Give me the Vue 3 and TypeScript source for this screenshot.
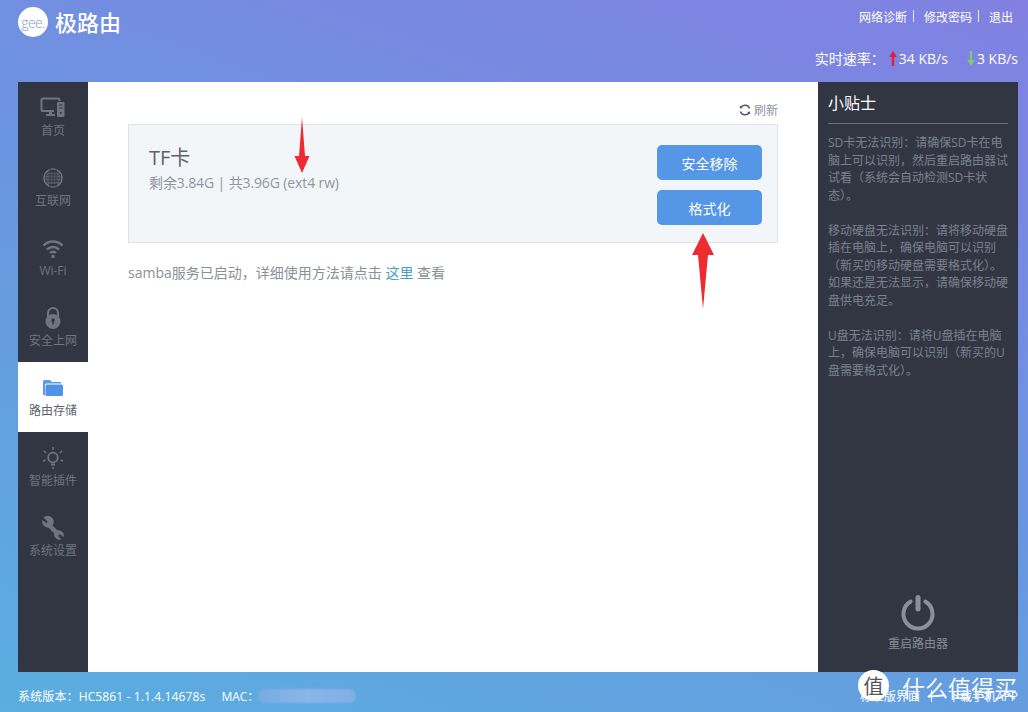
<template>
  <div class="page">
    <!-- Header -->
    <header class="top">
      <div class="brand">
        <span class="logo">gee.</span>
        <span class="brand-name">极路由</span>
      </div>
      <div class="top-right">
        <div class="top-links">
          <a>网络诊断</a><i></i><a>修改密码</a><i></i><a>退出</a>
        </div>
        <div class="speed">
          <span class="speed-label">实时速率：</span>
          <svg class="arrow-mini" width="8" height="15" viewBox="0 0 8 15"><path d="M4 0 8 6H5.2V15H2.8V6H0Z" fill="#e0223c" /></svg>
          <span class="speed-val">34 KB/s</span>
          <svg class="arrow-mini down" width="8" height="15" viewBox="0 0 8 15"><path d="M4 15 8 9H5.2V0H2.8V9H0Z" fill="#7fc97f" /></svg>
          <span>3 KB/s</span>
        </div>
      </div>
    </header>

    <!-- Main -->
    <main class="main">
      <nav class="side">
        <div v-for="item in navItems" :key="item.label" class="nav-item" :class="{ active: item.active }">
          <svg class="nav-icon" width="28" height="28" viewBox="0 0 28 28" v-html="item.icon"></svg>
          <span>{{ item.label }}</span>
        </div>
      </nav>

      <section class="content">
        <div class="refresh">
          <svg width="12" height="12" viewBox="0 0 12 12" fill="none">
            <path d="M10.6 4.4A5 5 0 0 0 1.6 3.6M1.4 7.6A5 5 0 0 0 10.4 8.4" stroke="#555b66" stroke-width="1.5" />
            <path d="M.6 1.6 1 4.6 4 4ZM11.4 10.4 11 7.4 8 8Z" fill="#555b66" />
          </svg>
          <span>刷新</span>
        </div>
        <div class="card">
          <div class="card-info">
            <div class="card-title">TF卡</div>
            <div class="card-sub">剩余3.84G | 共3.96G (ext4 rw)</div>
          </div>
          <div class="card-actions">
            <button type="button">安全移除</button>
            <button type="button">格式化</button>
          </div>
        </div>
        <p class="samba">samba服务已启动，详细使用方法请点击 <a>这里</a> 查看</p>
      </section>

      <aside class="tips">
        <h3>小贴士</h3>
        <div class="tips-body">
          <p v-for="tip in tips" :key="tip">{{ tip }}</p>
        </div>
        <div class="reboot">
          <svg width="36" height="36" viewBox="0 0 36 36" fill="none">
            <path d="M10.65 6.500A14.500 14.500 0 1 0 25.350 6.500" stroke="#8a909b" stroke-width="4" stroke-linecap="round" />
            <path d="M18 2.500V14" stroke="#8a909b" stroke-width="5" stroke-linecap="round" />
          </svg>
          <span>重启路由器</span>
        </div>
      </aside>
    </main>

    <!-- Footer -->
    <footer class="bottom">
      <div class="sys">
        <span class="version">系统版本：HC5861 - 1.1.4.14678s</span>
        <span class="mac">MAC：<b class="mac-blur"></b></span>
      </div>
      <div class="bottom-links">
        <a>标准版界面</a><i></i><a>下载手机APP</a>
      </div>
    </footer>

    <!-- Annotation arrows drawn over the screenshot -->
    <svg class="mark mark-a" width="16" height="56" viewBox="0 0 16 56"><path d="M8 0 11 39H15.500L8 56 .5 39H5Z" fill="#ee2b30" /></svg>
    <svg class="mark mark-b" width="22" height="76" viewBox="0 0 22 76"><path d="M11 0 22 22H16L11 76 6 22H0Z" fill="#ee2b30" /></svg>

    <!-- Watermark -->
    <div class="watermark">
      <span class="wm-badge">值</span>
      <span class="wm-text">什么值得买</span>
    </div>
  </div>
</template>

<script setup lang="ts">
interface NavItem {
  label: string
  icon: string
  active?: boolean
}

const navItems: NavItem[] = [
  {
    label: '首页',
    icon: '<g fill="none" stroke="#6f7480" stroke-width="2"><path d="M15 17H4a1.500 1.500 0 0 1-1.500-1.500V6A1.500 1.500 0 0 1 4 4.500h15A1.500 1.500 0 0 1 20.500 6v1"/></g><path d="M7 20h9v2H7zM10 17h3v3h-3z" fill="#6f7480"/><rect x="18" y="8" width="7.500" height="15" rx="1" fill="#6f7480"/><path d="M20 11h3.500M20 14h3.500" stroke="#323643"/><circle cx="21.700" cy="19" r="1" fill="#323643"/>',
  },
  {
    label: '互联网',
    icon: '<circle cx="14" cy="14" r="9" fill="none" stroke="#6f7480" stroke-width="1.500"/><path d="M9 8.500h10l2.500 3v5l-2.500 3.500H9l-2.500-3.500v-5z" fill="#6f7480" opacity=".7"/><path d="M6 11h16M6 14h16M6 17h16M11 5v18M14 5v18M17 5v18" stroke="#323643"/>',
  },
  {
    label: 'Wi-Fi',
    icon: '<g fill="none" stroke="#6f7480" stroke-width="2.500"><path d="M4.500 11.500a13.500 13.500 0 0 1 19 0"/><path d="M8 15.500a8.500 8.500 0 0 1 12 0"/><path d="M11 19a4 4 0 0 1 6 0"/></g><circle cx="14" cy="22.500" r="1.800" fill="#6f7480"/>',
  },
  {
    label: '安全上网',
    icon: '<path d="M9 13V9a5 5 0 0 1 10 0v4" fill="none" stroke="#6f7480" stroke-width="2.200"/><circle cx="14" cy="17.500" r="7.500" fill="#6f7480"/><circle cx="14" cy="16" r="1.800" fill="#323643"/><path d="M13.200 16h1.600v4.500h-1.600z" fill="#323643"/>',
  },
  {
    label: '路由存储',
    active: true,
    icon: '<path d="M4 20V7.500A1.500 1.500 0 0 1 5.500 6h5.500l2 2h9v1.500H7.500A1.500 1.500 0 0 0 6 11v10.500A2 2 0 0 1 4 20z" fill="#5a9ae6"/><rect x="6.500" y="10.500" width="17.500" height="11.500" rx="1.500" fill="#4f92e6"/>',
  },
  {
    label: '智能插件',
    icon: '<circle cx="14" cy="13.500" r="4.800" fill="none" stroke="#6f7480" stroke-width="1.800"/><path d="M12 19.500h4v2h-4z" fill="#6f7480"/><path d="M14 3v3M5 7l2.200 2M23 7l-2.200 2M4 17l2.500-1M24 17l-2.500-1M14 23v2" stroke="#6f7480" stroke-width="1.500" fill="none"/>',
  },
  {
    label: '系统设置',
    // single diagonal spanner: open jaw top-left, open jaw bottom-right
    icon: '<path d="M9.500 10.500 19 20" stroke="#6f7480" stroke-width="4.500"/><path d="M4.500 3.500 8.500 7.500 7.500 9.500 3.500 6a6 6 0 0 0 8.500 7l2-2.500A6 6 0 0 0 4.500 3.500z" fill="#6f7480"/><path d="M24.500 23 20.500 20 19 22 22.500 25.500a5.500 5.500 0 0 1-7-7l2-2a5.500 5.500 0 0 1 7 7z" fill="#6f7480"/>',
  },
]

const tips: string[] = [
  'SD卡无法识别：请确保SD卡在电脑上可以识别，然后重启路由器试试看（系统会自动检测SD卡状态）。',
  '移动硬盘无法识别：请将移动硬盘插在电脑上，确保电脑可以识别（新买的移动硬盘需要格式化）。如果还是无法显示，请确保移动硬盘供电充足。',
  'U盘无法识别：请将U盘插在电脑上，确保电脑可以识别（新买的U盘需要格式化）。',
]
</script>

<style>
html,
body {
  margin: 0;
  overflow: hidden;
}
</style>

<style scoped>
.page {
  position: relative;
  display: flex;
  flex-direction: column;
  width: 1028px;
  height: 712px;
  overflow: hidden;
  background: linear-gradient(20deg, #5aaee0 0%, #6a96e0 50%, #8280e2 100%);
  font-family: "Open Sans", "Noto Sans CJK SC", sans-serif;
  color: #fff;
}

/* header */
.top {
  display: flex;
  justify-content: space-between;
  flex: 0 0 82px;
  padding: 7px 10px 0 18px;
  box-sizing: border-box;
}
.brand {
  display: flex;
  align-items: flex-start;
  gap: 7px;
}
.logo {
  display: flex;
  align-items: center;
  justify-content: center;
  width: 30px;
  height: 30px;
  border-radius: 50%;
  background: #fff;
  color: #7f97d8;
  font-size: 14px;
  font-weight: 300;
  letter-spacing: -0.6px;
}
.brand-name {
  font-size: 22px;
  line-height: 30px;
  font-weight: 500;
}
.top-right {
  display: flex;
  flex-direction: column;
  align-items: flex-end;
}
.top-links {
  display: flex;
  align-items: center;
  height: 20px;
  padding-right: 5px;
  font-size: 12px;
}
.top-links i {
  width: 1px;
  height: 12px;
  margin: -3px 10px 0 6px;
  background: #e6e8f8;
}
.speed {
  display: flex;
  align-items: center;
  height: 22px;
  margin-top: 20px;
  font-size: 14px;
}
.speed-label {
  margin-right: 4px;
}
.arrow-mini {
  margin-right: 2px;
}
.arrow-mini.down {
  margin-left: 19px;
}

/* main */
.main {
  display: flex;
  flex: 1;
  min-height: 0;
  margin: 0 10px 0 18px;
  background: #fff;
}
.side {
  flex: 0 0 70px;
  background: #323643;
}
.nav-item {
  display: flex;
  flex-direction: column;
  align-items: center;
  height: 70px;
  padding-top: 12px;
  box-sizing: border-box;
  color: #6f7480;
  font-size: 12px;
  line-height: 16px;
}
.nav-item.active {
  background: #fff;
  color: #5d626c;
}
.nav-icon {
  margin-bottom: 1px;
}

.content {
  flex: 1;
  min-width: 0;
  padding: 20px 40px 0;
}
.refresh {
  display: flex;
  justify-content: flex-end;
  align-items: center;
  gap: 3px;
  height: 16px;
  color: #8d939c;
  font-size: 12px;
}
.card {
  display: flex;
  justify-content: space-between;
  height: 119px;
  margin-top: 6px;
  padding: 20px 15px 0 20px;
  box-sizing: border-box;
  border: 1px solid #dfe3e6;
  background: #f3f6f9;
}
.card-title {
  margin-top: 1px;
  font-size: 20px;
  line-height: 24px;
  color: #5c626d;
}
.card-sub {
  margin-top: 4px;
  font-size: 14px;
  line-height: 18px;
  letter-spacing: -0.12px;
  color: #90959e;
}
.card-actions {
  display: flex;
  flex-direction: column;
  gap: 10px;
}
.card-actions button {
  width: 105px;
  height: 35px;
  padding: 0;
  border: none;
  border-radius: 5px;
  background: #5596e6;
  color: #fff;
  font: inherit;
  font-size: 14px;
}
.samba {
  margin: 21px 0 0;
  font-size: 14px;
  line-height: 18px;
  color: #8a9099;
}
.samba a {
  color: #4a9cc9;
}

/* tips */
.tips {
  display: flex;
  flex-direction: column;
  flex: 0 0 200px;
  padding: 0 10px;
  box-sizing: border-box;
  background: #323643;
}
.tips h3 {
  margin: 0;
  height: 41px;
  line-height: 43px;
  font-size: 16px;
  font-weight: 400;
  border-bottom: 1px solid #6d717b;
}
.tips-body {
  flex: 1;
  padding-top: 10px;
  font-size: 12px;
  line-height: 17.500px;
  color: #7a8190;
}
.tips-body p {
  margin: 0 0 17.500px;
}
.reboot {
  display: flex;
  flex-direction: column;
  align-items: center;
  gap: 5px;
  padding-bottom: 20px;
  color: #858b96;
  font-size: 12px;
  line-height: 16px;
}

/* footer */
.bottom {
  display: flex;
  justify-content: space-between;
  align-items: center;
  flex: 0 0 40px;
  padding: 8px 10px 0 18px;
  box-sizing: border-box;
  font-size: 12px;
}
.sys {
  display: flex;
  align-items: center;
  gap: 16px;
}
.version {
  letter-spacing: 0.13px;
}
.mac {
  display: flex;
  align-items: center;
}
.mac-blur {
  width: 99px;
  height: 14px;
  margin-left: -2px;
  border-radius: 7px;
  background: linear-gradient(90deg, #76ace6, #8ab6e8 50%, #7fb0e6);
  filter: blur(1px);
}
.bottom-links {
  display: flex;
  align-items: center;
}
.bottom-links i {
  width: 1px;
  height: 12px;
  margin: 0 16px 0 11px;
  background: #fff;
}

/* overlays */
.mark {
  position: absolute;
}
.mark-a {
  left: 294px;
  top: 117px;
}
.mark-b {
  left: 692px;
  top: 233px;
}
.watermark {
  position: absolute;
  left: 858px;
  top: 668px;
  display: flex;
  align-items: center;
  gap: 13px;
  font-family: "Noto Sans CJK SC", sans-serif;
}
.wm-badge {
  display: flex;
  align-items: center;
  justify-content: center;
  width: 31px;
  height: 31px;
  border-radius: 50%;
  background: #fff;
  color: #555;
  font-size: 20px;
}
.wm-text {
  margin-top: 4px;
  font-size: 23px;
  line-height: 30px;
  color: rgba(255, 255, 255, 0.95);
}
</style>
